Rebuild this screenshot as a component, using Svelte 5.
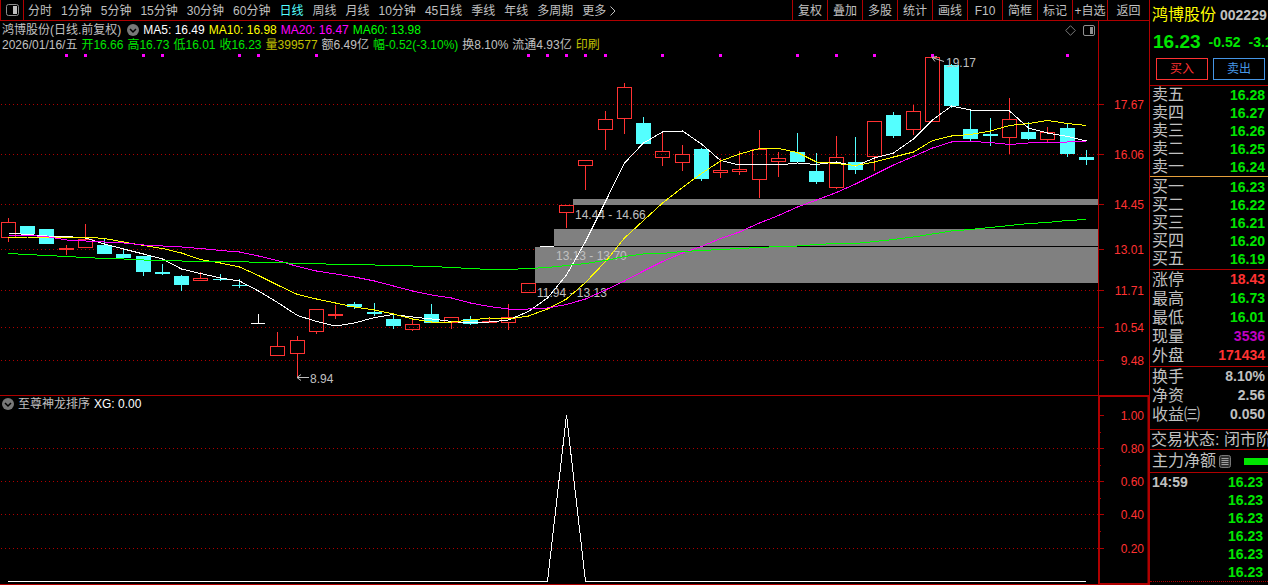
<script>
  const periods = ['分时', '1分钟', '5分钟', '15分钟', '30分钟', '60分钟', '日线', '周线', '月线', '10分钟', '45日线', '季线', '年线', '多周期'];
  const tools = ['复权', '叠加', '多股', '统计', '画线', 'F10', '简框', '标记', '+自选', '返回'];

  const averages = [
    { label: 'MA5: 16.49', tone: 'white' },
    { label: 'MA10: 16.98', tone: 'yellow' },
    { label: 'MA20: 16.47', tone: 'magenta' },
    { label: 'MA60: 13.98', tone: 'lime' }
  ];
  const facts = [
    { text: '2026/01/16/五', tone: 'grey' },
    { text: '开16.66', tone: 'green' },
    { text: '高16.73', tone: 'green' },
    { text: '低16.01', tone: 'green' },
    { text: '收16.23', tone: 'green' },
    { text: '量399577', tone: 'gold' },
    { text: '额6.49亿', tone: 'grey' },
    { text: '幅-0.52(-3.10%)', tone: 'green' },
    { text: '换8.10%', tone: 'grey' },
    { text: '流通4.93亿', tone: 'grey' },
    { text: '印刷', tone: 'gold' }
  ];

  // Candle: kind (u hollow, d filled, f flat), body top, body bottom, wick top, wick bottom
  const candles = [
    ['u', 222, 238, 218, 242], ['d', 226, 234, 226, 236], ['d', 229, 244, 229, 244], ['u', 248, 250, 245, 255],
    ['u', 239, 248, 224, 248], ['d', 245, 254, 239, 254], ['d', 254, 258, 248, 259], ['d', 256, 272, 256, 276],
    ['d', 272, 274, 264, 275], ['d', 276, 285, 275, 291], ['u', 278, 281, 272, 281], ['d', 279, 280, 274, 281],
    ['d', 285, 286, 279, 288], ['f', 323, 324, 314, 324], ['u', 346, 356, 332, 356], ['u', 340, 354, 336, 377],
    ['u', 309, 332, 309, 334], ['u', 314, 316, 305, 319], ['d', 304, 307, 302, 309], ['d', 312, 314, 303, 316],
    ['d', 319, 326, 315, 329], ['u', 324, 330, 318, 331], ['d', 314, 323, 304, 323], ['u', 317, 323, 317, 329],
    ['d', 319, 324, 316, 325], ['u', 321, 323, 318, 323], ['u', 317, 323, 304, 330], ['u', 283, 293, 283, 293],
    ['f', 246, 247, 246, 247], ['u', 205, 213, 205, 228], ['u', 160, 166, 160, 190], ['u', 119, 130, 111, 150],
    ['u', 87, 119, 83, 134], ['d', 123, 144, 117, 144], ['u', 151, 158, 131, 166], ['u', 154, 163, 145, 171],
    ['d', 149, 179, 148, 181], ['u', 170, 173, 158, 178], ['u', 169, 172, 151, 175], ['u', 149, 180, 130, 198],
    ['u', 158, 162, 152, 177], ['d', 152, 162, 133, 162], ['d', 171, 182, 153, 184], ['u', 157, 188, 136, 189],
    ['d', 162, 170, 137, 174], ['u', 121, 157, 121, 171], ['d', 115, 136, 112, 138], ['u', 111, 130, 105, 135],
    ['u', 57, 122, 57, 122], ['d', 65, 106, 64, 108], ['d', 129, 139, 109, 141], ['d', 134, 136, 118, 146],
    ['u', 119, 138, 98, 154], ['d', 132, 139, 122, 140], ['u', 132, 140, 127, 142], ['d', 128, 154, 124, 157],
    ['d', 157, 160, 150, 165]
  ].map(([kind, top, bottom, high, low]) => ({ kind, top, bottom, high, low }));

  const ma5 = [233, 234.5, 236, 236.5, 238, 244, 249, 254, 259, 269, 273.5, 278, 281, 291, 302.5, 315.5, 321.5, 326, 323, 317.5, 314.5, 317, 319, 321.5, 323, 322, 320, 311.5, 298, 275, 241.5, 201.5, 163, 143, 132, 131, 144, 160.5, 165, 164.5, 165, 163, 164.5, 162, 166, 158, 153, 139, 120, 106, 110, 110, 111, 128, 133, 136.5, 141];
  const ma10 = [238, 237, 237, 237, 237, 238.5, 242, 245.5, 248.5, 253, 259.5, 263, 267, 275.5, 285, 294.5, 299, 303, 307, 310, 314, 319, 322, 322, 320, 318, 319, 316, 309, 299, 282.5, 261.5, 238, 220.5, 203, 187.5, 173.5, 161, 154, 148.5, 148.5, 152.5, 162, 163.5, 165.5, 162, 157, 152, 140.5, 136, 134.5, 131, 125.5, 123.5, 120.5, 123.5, 125.5];
  const ma20 = [235, 235.5, 236.5, 240, 241, 242, 243, 245, 246, 247, 248.5, 250.5, 252, 256, 260.5, 266.5, 271, 274, 277, 281, 286, 291, 295, 298, 303, 306.5, 309, 309, 308, 304.5, 299, 290, 281, 271, 261.5, 253, 246.5, 238.5, 232, 223, 215.5, 207, 200, 192.5, 184, 174.5, 165, 156.5, 148, 142, 141.5, 142.5, 144.5, 143, 142.5, 142, 141];
  const ma60 = [253.5, 254.5, 255.5, 256.5, 257.5, 258.5, 259, 260, 260.5, 261, 261.5, 261.5, 261.5, 262.5, 262.5, 263.5, 263.5, 264.5, 264.5, 265, 265.5, 266, 266.5, 267.5, 268.5, 269.5, 269.5, 268.5, 267.5, 265.5, 263.5, 260.5, 256.5, 254, 253.5, 251.5, 250.5, 249.5, 248.5, 247.5, 246.5, 246, 244.5, 243.5, 243.5, 241.5, 239.5, 237, 234, 231, 229.5, 227.5, 225.5, 223.5, 222.5, 220.5, 219.5];

  const marks = [3, 4, 7, 8, 12, 13, 16, 27, 28, 29, 30, 31, 34, 37, 41, 43, 45, 48, 55];
  const prices = [[104, '17.67'], [154, '16.06'], [204, '14.45'], [249, '13.01'], [290, '11.71'], [327, '10.54'], [360, '9.48']];
  const levels = [[415, '1.00'], [448, '0.80'], [481, '0.60'], [514, '0.40'], [548, '0.20']];
  const minor = [432, 465, 498, 531];
  const gaps = [
    { i: 29, top: 199, bottom: 205, y: 219, label: '14.44 - 14.66' },
    { i: 28, top: 229, bottom: 246, y: 260, label: '13.13 - 13.70' },
    { i: 27, top: 247, bottom: 283, y: 297, label: '11.94 - 13.13' }
  ];

  const asks = [['卖五', '16.28'], ['卖四', '16.27'], ['卖三', '16.26'], ['卖二', '16.25'], ['卖一', '16.24']];
  const bids = [['买一', '16.23'], ['买二', '16.22'], ['买三', '16.21'], ['买四', '16.20'], ['买五', '16.19']];
  const stats = [['涨停', '18.43', 'red'], ['最高', '16.73', 'green'], ['最低', '16.01', 'green'], ['现量', '3536', 'purple'], ['外盘', '171434', 'red']];
  const finance = [['换手', '8.10%'], ['净资', '2.56'], ['收益㈢', '0.050']];
  const trades = [['14:59', '16.23'], ['', '16.23'], ['', '16.23'], ['', '16.23'], ['', '16.23'], ['', '16.23']];

  let width = $state(1098);
  const step = $derived((width - 20) / 56);
  const x = (i) => Math.ceil(7.5 + i * step);
  const path = (ys) => ys.map((y, i) => `${x(i) + 0.5},${y}`).join(' ');
</script>

<div class="page">
  <main>
    <nav class="toolbar">
      <button class="toggle" aria-label="侧栏">
        <svg width="13" height="12" viewBox="0 0 13 12"><rect x="0.5" y="0.5" width="12" height="11" rx="2" fill="none" stroke="#909090" /><rect x="7" y="2" width="4" height="8" fill="#c0c0c0" /></svg>
      </button>
      <div class="periods">
        {#each periods as p}
          <button class:active={p === '日线'}>{p}</button>
        {/each}
        <button class="more">更多<svg width="6" height="10" viewBox="0 0 6 10"><path d="M0.5 0.5 5 5 0.5 9.5" fill="none" stroke="#c0c0c0" /></svg></button>
      </div>
      <div class="tools">
        {#each tools as t}<button>{t}</button>{/each}
      </div>
    </nav>

    <section class="panel price">
      <div class="left" bind:clientWidth={width}>
        <header>
          <div class="line title">
            <span class="grey">鸿博股份(日线.前复权)</span>
            <button class="drop" aria-label="指标菜单">
              <svg width="12" height="12" viewBox="0 0 12 12"><circle cx="6" cy="6" r="6" fill="#787878" /><path d="M3 5 6 8 9 5" fill="none" stroke="#000" stroke-width="1.5" /></svg>
            </button>
            {#each averages as a}<span class={a.tone}>{a.label}</span>{/each}
            <span class="corner">
              <svg width="11" height="11" viewBox="0 0 11 11"><path d="M5.5 0.7 10.3 5.5 5.5 10.3 0.7 5.5Z" fill="none" stroke="#787878" /></svg>
              <svg width="12" height="11" viewBox="0 0 12 11"><rect x="0.5" y="0.5" width="11" height="10" rx="1.5" fill="none" stroke="#909090" /><rect x="7" y="2" width="3" height="7" fill="#909090" /></svg>
            </span>
          </div>
          <div class="line facts">
            {#each facts as f}<span class={f.tone}>{f.text}</span>{/each}
          </div>
        </header>
        <svg class="plot" width="100%" height="344" viewBox={`0 51 ${width} 344`}>
          <g shape-rendering="crispEdges">
            {#each prices as [y]}
              <line x1="1" x2={width} y1={y + 0.5} y2={y + 0.5} stroke="#b00000" stroke-dasharray="1 3" />
            {/each}
            {#each gaps as g}
              <rect x={x(g.i) + 7} y={g.top} width={width - x(g.i) - 7} height={g.bottom - g.top} fill="#808080" />
            {/each}
            <rect x={x(28) + 7} y="246" width={width - x(28) - 7} height="1" fill="#000" />
            {#each candles as c, i}
              {#if c.kind === 'u'}
                <path d={`M${x(i) + 0.5} ${c.high}V${c.top}M${x(i) + 0.5} ${c.bottom}V${c.low}`} stroke="#ff3232" />
                <rect x={x(i) - 6.5} y={c.top + 0.5} width="14" height={c.bottom - c.top - 1} fill="none" stroke="#ff3232" />
              {:else if c.kind === 'd'}
                <rect x={x(i)} y={c.high} width="1" height={c.low - c.high} fill="#54ffff" />
                <rect x={x(i) - 7} y={c.top} width="15" height={c.bottom - c.top} fill="#54ffff" />
              {:else}
                <rect x={x(i)} y={c.high} width="1" height={c.low - c.high} fill="#fff" />
                <rect x={x(i) - 7} y={c.top} width="14" height="1" fill="#fff" />
              {/if}
            {/each}
            {#each marks as i}
              <rect x={x(i) - 1} y="54" width="3" height="3" fill="#ff00ff" />
            {/each}
          </g>
          {#each gaps as g}
            <text x={x(g.i) + 9} y={g.y} fill="#c0c0c0">{g.label}</text>
          {/each}
          <g fill="none" shape-rendering="crispEdges">
            <polyline points={path(ma5)} stroke="#fff" />
            <polyline points={path(ma10)} stroke="#ffff00" />
            <polyline points={path(ma20)} stroke="#ff00ff" />
            <polyline points={path(ma60)} stroke="#00ff00" />
          </g>
          <g fill="none" stroke="#c0c0c0">
            <path d={`M${x(15) + 12} 377.5H${x(15)}m4 -3l-4 3l4 3`} />
            <path d={`M${x(48) + 12} 61.5L${x(48)} 57.5m5 -1l-5 1l3 4`} />
          </g>
          <text x={x(15) + 13} y="383" fill="#c0c0c0">8.94</text>
          <text x={x(48) + 14} y="67" fill="#c0c0c0">19.17</text>
        </svg>
      </div>
      <svg class="axis" width="51" height="374" viewBox="0 21 51 374">
        <path d="M0.5 21V395" stroke="#b00000" />
        {#each prices as [y, label]}
          <path d={`M1 ${y + 0.5}h5`} stroke="#b00000" />
          <text x="46" y={y + 5} text-anchor="end" fill="#ff3232">{label}</text>
        {/each}
      </svg>
    </section>

    <section class="panel study">
      <div class="left">
        <header class="line title">
          <button class="drop" aria-label="副图菜单">
            <svg width="12" height="12" viewBox="0 0 12 12"><circle cx="6" cy="6" r="6" fill="#787878" /><path d="M3 5 6 8 9 5" fill="none" stroke="#000" stroke-width="1.5" /></svg>
          </button>
          <span class="grey">至尊神龙排序</span>
          <span class="white">XG: 0.00</span>
        </header>
        <svg class="plot" width="100%" height="172" viewBox={`0 412 ${width} 172`} shape-rendering="crispEdges">
          {#each levels.slice(1) as [y]}
            <line x1="1" x2={width} y1={y + 0.5} y2={y + 0.5} stroke="#b00000" stroke-dasharray="1 3" />
          {/each}
          <path d={`M${x(0)} 581.5H${x(28) + 0.5}L${x(29) + 0.5} 415L${x(30) + 0.5} 581.5H${x(56)}`} fill="none" stroke="#fff" />
        </svg>
      </div>
      <svg class="axis" width="51" height="190" viewBox="0 395 51 190">
        <path d="M1 395V585M0 396H51M0 584H51M50.5 395V585" stroke="#b00000" stroke-width="2" fill="none" />
        {#each levels as [y, label]}
          <path d={`M2 ${y + 0.5}h4`} stroke="#b00000" />
          <text x="46" y={y + 5} text-anchor="end" fill="#ff3232">{label}</text>
        {/each}
        {#each minor as y}<path d={`M2 ${y + 0.5}h1`} stroke="#b00000" />{/each}
      </svg>
    </section>
  </main>

  <aside>
    <div class="quote">
      <div class="name"><span class="yellow">鸿博股份</span><b class="grey">002229</b></div>
      <div class="last green"><strong>16.23</strong><b>-0.52</b><b>-3.10%</b></div>
      <div class="deal"><button class="buy">买入</button><button class="sell">卖出</button></div>
    </div>
    <table class="asks"><tbody>
      {#each asks as [k, v]}<tr><th scope="row">{k}</th><td class="green">{v}</td></tr>{/each}
    </tbody></table>
    <div class="bids"><table><tbody>
      {#each bids as [k, v]}<tr><th scope="row">{k}</th><td class="green">{v}</td></tr>{/each}
    </tbody></table></div>
    <div class="stats"><table><tbody>
      {#each stats as [k, v, tone]}<tr><th scope="row">{k}</th><td class={tone}>{v}</td></tr>{/each}
    </tbody></table></div>
    <div class="finance"><table><tbody>
      {#each finance as [k, v]}<tr><th scope="row">{k}</th><td class="grey">{v}</td></tr>{/each}
    </tbody></table></div>
    <div class="status">交易状态: 闭市阶段</div>
    <div class="force">
      <span>主力净额</span>
      <svg width="12" height="13" viewBox="0 0 12 13"><rect x="0.5" y="0.5" width="11" height="12" rx="2" fill="#303030" stroke="#787878" /><path d="M2.5 3.5h7M2.5 5.5h7M2.5 7.5h7M2.5 9.5h7" stroke="#a0a0a0" /></svg>
      <i class="bar"></i>
    </div>
    <div class="trades"><table><tbody>
      {#each trades as [t, v]}<tr><th scope="row">{t}</th><td class="green">{v}</td></tr>{/each}
    </tbody></table></div>
  </aside>
</div>

<style>
  :global(body) { margin: 0; background: #000; }
  .page {
    display: flex;
    min-height: 100vh;
    overflow: hidden;
    background: #000;
    color: #c0c0c0;
    font: 12px/16px "Liberation Sans", "Noto Sans CJK SC", sans-serif;
    white-space: nowrap;
  }
  button { margin: 0; padding: 0; border: 0; background: none; color: inherit; font: inherit; cursor: pointer; }
  svg { display: block; flex: none; }
  text { font-size: 12px; }
  main { flex: 1; min-width: 0; }

  .toolbar { display: flex; height: 20px; border-bottom: 1px solid #b00000; }
  .toggle { display: grid; place-items: center; width: 24px; border: solid #b00000; border-width: 0 1px; }
  .periods { display: flex; flex: 1; gap: 9px; min-width: 0; padding-left: 4px; overflow: hidden; }
  .periods button { flex: none; padding-top: 1px; }
  .periods .active { color: #54ffff; }
  .periods .more { display: flex; align-items: center; gap: 4px; }
  .tools { display: flex; flex: none; }
  .tools button { width: 35px; padding-top: 1px; border-left: 1px solid #b00000; }
  .tools button:last-child { width: 42px; }

  .panel { display: flex; }
  .left { flex: 1; min-width: 0; }
  .plot { width: 100%; }
  .line { display: flex; align-items: center; }
  .price .title { gap: 4px; height: 17px; padding: 1px 3px 0 2px; box-sizing: border-box; }
  .price .drop { margin-left: 2px; }
  .facts { gap: 4px; height: 13px; padding-left: 2px; }
  .corner { display: flex; align-items: center; gap: 7px; margin-left: auto; }
  .study .left { border-top: 1px solid #b00000; border-bottom: 1px solid #b00000; }
  .study .title { gap: 4px; height: 16px; padding-left: 2px; }

  .white { color: #fff; }
  .grey { color: #c0c0c0; }
  .yellow { color: #ffff00; }
  .gold { color: #c0c000; }
  .magenta { color: #ff00ff; }
  .purple { color: #c000c0; }
  .lime { color: #00ff00; }
  .green { color: #00e600; }
  .red { color: #ff3232; }

  aside { flex: 0 0 118px; min-width: 0; border-left: 1px solid #b00000; overflow: hidden; font-size: 16px; }
  .quote { height: 85px; border-bottom: 1px solid #b00000; }
  .name { display: flex; align-items: center; gap: 4px; height: 30px; padding-left: 2px; }
  .last { display: flex; align-items: center; gap: 8px; height: 24px; padding-left: 3px; }
  .last strong { font-size: 19px; }
  .last b, .name b { font-size: 14px; }
  .deal { display: flex; gap: 5px; padding: 4px 3px 0 6px; }
  .deal button { flex: 1; height: 22px; border: 1px solid; font-size: 12px; line-height: 18px; }
  .deal .buy { color: #ff3232; }
  .deal .sell { color: #4696e6; }

  table { width: 100%; border-spacing: 0; }
  th { height: 18px; padding: 0 0 0 2px; font-weight: 400; text-align: left; color: #c0c0c0; line-height: 18px; }
  td { height: 18px; padding: 0 3px 0 0; font-size: 14px; font-weight: 700; text-align: right; line-height: 18px; }
  .bids { padding: 1px 0; border-top: 1px solid #e6a03c; border-bottom: 1px solid #b00000; }
  .stats { padding-bottom: 1px; border-bottom: 1px solid #b00000; }
  .stats th, .stats td, .finance th, .finance td { height: 19px; line-height: 19px; }
  .finance { padding-bottom: 5px; border-bottom: 1px solid #b00000; }
  .status { height: 19px; padding-left: 1px; border-bottom: 1px solid #b00000; line-height: 19px; }
  .force { display: flex; align-items: center; gap: 3px; height: 22px; padding-left: 2px; border-bottom: 1px solid #b00000; }
  .bar { flex: 1; height: 7px; margin-left: 10px; background: #00e600; }
  .trades { border-bottom: 1px dotted #b00000; }
  .trades th { font-size: 14px; font-weight: 700; }
  .trades td { padding-right: 5px; }
</style>
